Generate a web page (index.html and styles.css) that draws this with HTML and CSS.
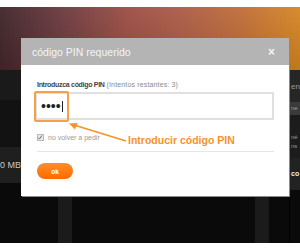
FILE: index.html
```html
<!DOCTYPE html>
<html>
<head>
<meta charset="utf-8">
<link rel="stylesheet" href="styles.css">
</head>
<body>
<div class="page">
  <div class="strip"></div>
  <div class="header"></div>
  <div class="content">
    <div class="main">
      <div class="row1"></div>
      <div class="row2"></div>
      <div class="band"><span class="mb">0 MB</span></div>
      <div class="lower">
        <div class="col col-a"></div>
        <div class="col col-b"></div>
      </div>
    </div>
    <div class="side">
      <div class="s1">en</div>
      <div class="s2">ne</div>
      <div class="s3"><span>né</span><span>ns</span></div>
      <div class="s4">co</div>
      <div class="s5"></div>
    </div>
  </div>
  <div class="strip"></div>

  <div class="dialog">
    <div class="dialog-title">
      <span>código PIN requerido</span>
      <span class="close">×</span>
    </div>
    <div class="dialog-body">
      <div class="label"><b>Introduzca código PIN</b> <span class="muted">(Intentos restantes: 3)</span></div>
      <div class="input"><span class="dots">••••</span><span class="caret"></span></div>
      <div class="check-row">
        <span class="checkbox">
          <svg width="7" height="7" viewBox="0 0 7 7"><path d="M1.3 3.6 L2.8 5.2 L5.8 1.2" fill="none" stroke="#666" stroke-width="1.1"/></svg>
        </span>
        <span class="check-label">no volver a pedir</span>
      </div>
      <div class="sep"></div>
      <div class="btn">ok</div>
    </div>
  </div>

  <div class="hl-box"></div>
  <svg class="arrow" width="70" height="30" viewBox="0 0 70 30">
    <line x1="6" y1="3" x2="58" y2="19" stroke="#f7922a" stroke-width="1.6"/>
    <polygon points="1,1.5 9.5,1 7,7.5" fill="#f7922a"/>
  </svg>
  <div class="annot">Introducir código PIN</div>
</div>
</body>
</html>
```
FILE: styles.css
```css
* { box-sizing: border-box; }
html, body { margin: 0; padding: 0; }
body { font-family: "Liberation Sans", Arial, sans-serif; background: #fff; }

.page {
  position: relative;
  width: 300px;
  height: 250px;
  display: flex;
  flex-direction: column;
  overflow: hidden;
}
.strip { height: 7px; background: #fff; flex: none; }
.header {
  height: 63px;
  flex: none;
  background:
    linear-gradient(180deg, rgba(255,255,255,0.06), rgba(0,0,0,0.12)),
    linear-gradient(100deg, #3d2328 0%, #6e3a3e 22%, #9c4d43 42%, #ab5a45 58%, #c06c36 78%, #d98a1f 100%);
}
.content { flex: 1; display: flex; background: #0b0b0b; }
.main { width: 289px; display: flex; flex-direction: column; }
.row1 { height: 30px; background: #1a1a1a; }
.row2 { height: 47px; background: #121212; }
.band {
  height: 36px;
  background: #1f1f1f;
  display: flex;
  align-items: center;
  color: #c8c8c8;
  font-size: 9px;
}
.mb { margin-left: 0; }
.lower { flex: 1; display: flex; background: #0a0a0a; }
.col { width: 14px; background: #1b1b1b; }
.col-a { margin-left: 58px; }
.col-b { margin-left: 183px; }

.side {
  width: 11px;
  border-left: 1px solid #000;
  display: flex;
  flex-direction: column;
  white-space: nowrap;
  color: #9a9a9a;
  padding-left: 1px;
  background: #0a0a0a;
}
.s1 { height: 32px; background: #262626; font-size: 8px; padding-top: 12px; margin-left: -1px; padding-left: 1px; }
.s2 { height: 13px; background: #3a3a3a; font-size: 6px; line-height: 13px; margin-left: -1px; padding-left: 1px; }
.s3 { height: 43px; background: #1c1c1c; font-size: 6px; display: flex; flex-direction: column; padding-top: 18px; line-height: 9px; margin-left: -1px; padding-left: 1px; }
.s4 { height: 32px; background: #222; font-size: 7px; font-weight: bold; color: #eee; padding-top: 12px; margin-left: -1px; padding-left: 1px; }
.s5 { flex: 1; }

.dialog {
  position: absolute;
  left: 21px;
  top: 38px;
  width: 268px;
  height: 158px;
  background: #fff;
  box-shadow: 1px 1px 0 #8a8a8a;
}
.dialog-title {
  height: 27px;
  background: #b4b4b4;
  display: flex;
  align-items: center;
  justify-content: space-between;
  padding: 0 14px 0 11px;
  color: #f4f4f4;
  font-size: 10.5px;
}
.close { font-size: 12px; font-weight: bold; color: #f2f2f2; }
.dialog-body { padding: 15px 15px 0 14px; }
.label { font-size: 7px; line-height: 9px; padding-left: 2px; color: #333; margin-bottom: 3px; white-space: nowrap; }
.label b { color: #444; letter-spacing: -0.3px; }
.muted { color: #8a8a8a; letter-spacing: 0.15px; }
.input {
  height: 28px;
  border: 2px solid #e0e0e0;
  display: flex;
  align-items: center;
  padding-left: 4px;
}
.dots { font-size: 14px; line-height: 14px; color: #222; }
.caret { width: 1px; height: 11px; background: #222; margin-left: 1px; }
.check-row { display: flex; align-items: center; height: 12px; margin-top: 11px; padding-left: 2px; }
.checkbox {
  width: 7px; height: 7px;
  border: 1px solid #bbb;
  background: #e8e8e8;
  display: flex;
  margin-right: 4px;
}
.checkbox svg { margin: -1px 0 0 -1px; }
.check-label { font-size: 7px; color: #9a9a9a; }
.sep { height: 1px; background: #e6e6e6; margin-top: 8px; margin-left: 2px; }
.btn {
  margin-top: 11px;
  margin-left: 2px;
  width: 36px;
  height: 16px;
  border-radius: 8px;
  background: linear-gradient(180deg, #ff8d2a, #ff6a00);
  color: #fff;
  font-size: 6.5px;
  font-weight: bold;
  display: flex;
  align-items: center;
  justify-content: center;
}

.hl-box {
  position: absolute;
  left: 34px;
  top: 91px;
  width: 35px;
  height: 31px;
  border: 2px solid #f6a048;
  border-radius: 2px;
}
.arrow { position: absolute; left: 68px; top: 122px; }
.annot {
  position: absolute;
  left: 128px;
  top: 134px;
  font-size: 10.5px;
  font-weight: bold;
  color: #f7922a;
  white-space: nowrap;
}
```
